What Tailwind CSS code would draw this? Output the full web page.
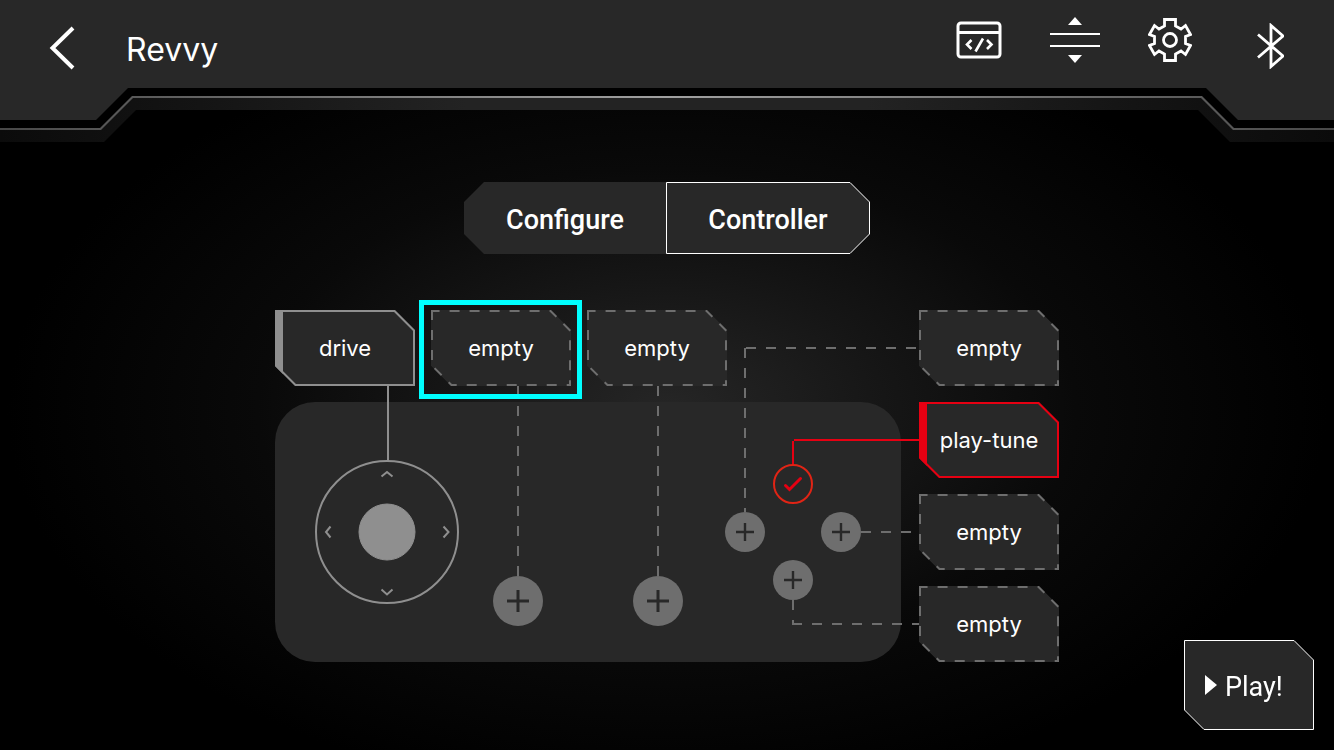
<!DOCTYPE html>
<html lang="en">
<head>
<meta charset="utf-8">
<meta name="viewport" content="width=device-width, initial-scale=1">
<title>Revvy</title>
<script src="https://cdn.jsdelivr.net/npm/@tailwindcss/browser@4"></script>
</head>
<body class="min-h-screen bg-black bg-[radial-gradient(ellipse_660px_390px_at_50%_410px,#262626_0%,#161616_33%,#090909_62%,#000_100%)] text-white">

<header class="relative h-[142px]">
  <!-- header plate: outer band, hairline, gap, plate -->
  <div class="absolute inset-0 bg-[linear-gradient(90deg,#0b0b0b,#141414_15%,#232323_35%,#232323_65%,#141414_85%,#0b0b0b)] [clip-path:polygon(0_0,100%_0,100%_142px,calc(100%-104px)_142px,calc(100%-136px)_110px,136px_110px,104px_142px,0_142px)]"></div>
  <div class="absolute inset-0 bg-[linear-gradient(90deg,#484848,#a0a0a0_50%,#484848)] [clip-path:polygon(0_0,100%_0,100%_130px,calc(100%-101px)_130px,calc(100%-133px)_98px,133px_98px,101px_130px,0_130px)]"></div>
  <div class="absolute inset-0 bg-black [clip-path:polygon(0_0,100%_0,100%_128px,calc(100%-100px)_128px,calc(100%-132px)_96px,132px_96px,100px_128px,0_128px)]"></div>
  <div class="absolute inset-0 bg-[#282828] [clip-path:polygon(0_0,100%_0,100%_120px,calc(100%-96px)_120px,calc(100%-128px)_88px,128px_88px,96px_120px,0_120px)]"></div>

  <div class="relative flex items-start justify-between pl-12 pr-[50px]">
    <div class="flex h-24 items-center gap-[50px]">
      <button type="button" aria-label="Back">
        <svg class="block" width="28" height="44" viewBox="0 0 28 44" fill="none" stroke="#fff" stroke-width="4"><path d="M25 2 4.500 22 25 42"/></svg>
      </button>
      <h1 class="pt-1 font-[Inter,sans-serif] text-[32px] leading-10">Revvy</h1>
    </div>
    <nav class="flex h-20 items-center gap-12">
      <button type="button" aria-label="Code">
        <svg class="block" width="46" height="38" viewBox="0 0 46 38" fill="none" stroke="#fff" stroke-width="3"><rect x="2" y="2" width="42" height="34" rx="3"/><path d="M2 11.500H44"/><path stroke-width="2.600" d="M15.500 19 11 23.500 15.500 28M31 19 35.500 23.500 31 28M27 17.500 19.500 30.500"/></svg>
      </button>
      <button type="button" aria-label="Reorder">
        <svg class="block" width="50" height="46" viewBox="0 0 50 46" fill="#fff"><path d="M25 0 32 8H18ZM25 46 32 38H18ZM0 16H50V18H0ZM0 28H50V30H0Z"/></svg>
      </button>
      <button type="button" aria-label="Settings">
        <svg class="block" width="44" height="44" viewBox="-22 -22 44 44" fill="none" stroke="#fff" stroke-width="2.800"><circle r="6.500"/><path d="M-5.500-20.500H5.500V-14L11-11 15.500-14.500 20.500-5.500 15.500-3.500V3.500L20.500 5.500 15.500 14.500 11 11 5.500 14V20.500H-5.500V14L-11 11-15.500 14.500-20.500 5.500-15.500 3.500V-3.500L-20.500-5.500-15.500-14.500-11-11-5.500-14Z"/></svg>
      </button>
      <button type="button" aria-label="Bluetooth" class="ml-4 mt-3">
        <svg class="block" width="28" height="46" viewBox="0 0 28 46" fill="none" stroke="#fff" stroke-width="2.800"><path d="M2 11.500 27 33 15 43.500V2.500L27 13 2 34.500"/></svg>
      </button>
    </nav>
  </div>
</header>

<main class="px-5 pt-10 pb-22">
  <div class="mx-auto flex w-fit font-[Roboto,sans-serif] text-[27px] font-medium leading-8">
    <button type="button" class="h-18 w-[202px] bg-[#282828] pt-1 [clip-path:polygon(20px_0,100%_0,100%_100%,20px_100%,0_52px,0_20px)]">Configure</button>
    <button type="button" aria-pressed="true" class="relative h-18 w-[204px] pt-1">
      <svg class="absolute inset-0" width="204" height="72" viewBox="0 0 204 72" fill="#282828" stroke="#fff"><path d="M.5.5H184L203.500 20V52L184 71.500H.5Z"/></svg>
      <span class="relative">Controller</span>
    </button>
  </div>

  <section aria-label="Controller layout" class="relative mx-auto mt-14 flex w-[784px] items-start justify-between font-[Inter,sans-serif] text-[22px] leading-8">
    <!-- controller body and wiring -->
    <svg class="absolute inset-0" width="784" height="352" viewBox="0 0 784 352" fill="none">
      <rect y="92" width="626" height="260" rx="40" fill="#282828"/>
      <g stroke="#8f8f8f" stroke-width="2">
        <path d="M113 76V151"/>
        <circle cx="112" cy="222" r="71"/>
        <circle cx="112" cy="222" r="28" fill="#8f8f8f" stroke-width="1"/>
        <path d="M106.500 166.500 112 162 117.500 166.500M106.500 279.500 112 284.500 117.500 279.500M55.500 216.500 51 222 55.500 227.500M168.500 216.500 173.500 222 168.500 227.500"/>
      </g>
      <g stroke="#6e6e6e" stroke-width="2" stroke-dasharray="10 10">
        <path d="M243 76V266M383 76V266M470 38V202M471 38H644M586 222H644M518 290V315M517 314H644"/>
      </g>
      <path d="M518 154V131M519 130H644" stroke="#e60012" stroke-width="2"/>
    </svg>

    <div class="relative flex gap-4">
      <button type="button" class="relative h-19 w-35 [clip-path:polygon(0_0,120px_0,140px_20px,140px_76px,20px_76px,0_56px)]">
        <svg class="absolute inset-0" width="140" height="76" viewBox="0 0 140 76"><path d="M0 0V56L20 76H140V20L120 0Z" fill="#282828" stroke="#8f8f8f" stroke-width="4"/><path d="M0 0H8V76H0Z" fill="#8f8f8f"/></svg>
        <span class="relative">drive</span>
      </button>
      <div class="relative">
        <button type="button" class="relative block h-19 w-35 [clip-path:polygon(0_0,120px_0,140px_20px,140px_76px,20px_76px,0_56px)]">
          <svg class="absolute inset-0" width="140" height="76" viewBox="0 0 140 76"><path d="M0 0V56L20 76H140V20L120 0Z" fill="#282828" stroke="#6e6e6e" stroke-width="4" stroke-dasharray="10 10"/></svg>
          <span class="relative">empty</span>
        </button>
        <div class="pointer-events-none absolute -top-2.5 -left-3 h-[99px] w-[163px] border-5 border-[#00ffff]"></div>
      </div>
      <button type="button" class="relative h-19 w-35 [clip-path:polygon(0_0,120px_0,140px_20px,140px_76px,20px_76px,0_56px)]">
        <svg class="absolute inset-0" width="140" height="76" viewBox="0 0 140 76"><path d="M0 0V56L20 76H140V20L120 0Z" fill="#282828" stroke="#6e6e6e" stroke-width="4" stroke-dasharray="10 10"/></svg>
        <span class="relative">empty</span>
      </button>
    </div>

    <div class="relative flex flex-col gap-4">
      <button type="button" class="relative h-19 w-35 [clip-path:polygon(0_0,120px_0,140px_20px,140px_76px,20px_76px,0_56px)]">
        <svg class="absolute inset-0" width="140" height="76" viewBox="0 0 140 76"><path d="M0 0V56L20 76H140V20L120 0Z" fill="#282828" stroke="#6e6e6e" stroke-width="4" stroke-dasharray="10 10"/></svg>
        <span class="relative">empty</span>
      </button>
      <button type="button" class="relative h-19 w-35 [clip-path:polygon(0_0,120px_0,140px_20px,140px_76px,20px_76px,0_56px)]">
        <svg class="absolute inset-0" width="140" height="76" viewBox="0 0 140 76"><path d="M0 0V56L20 76H140V20L120 0Z" fill="#282828" stroke="#e60012" stroke-width="4"/><path d="M0 0H8V76H0Z" fill="#e60012"/></svg>
        <span class="relative">play-tune</span>
      </button>
      <button type="button" class="relative h-19 w-35 [clip-path:polygon(0_0,120px_0,140px_20px,140px_76px,20px_76px,0_56px)]">
        <svg class="absolute inset-0" width="140" height="76" viewBox="0 0 140 76"><path d="M0 0V56L20 76H140V20L120 0Z" fill="#282828" stroke="#6e6e6e" stroke-width="4" stroke-dasharray="10 10"/></svg>
        <span class="relative">empty</span>
      </button>
      <button type="button" class="relative h-19 w-35 [clip-path:polygon(0_0,120px_0,140px_20px,140px_76px,20px_76px,0_56px)]">
        <svg class="absolute inset-0" width="140" height="76" viewBox="0 0 140 76"><path d="M0 0V56L20 76H140V20L120 0Z" fill="#282828" stroke="#6e6e6e" stroke-width="4" stroke-dasharray="10 10"/></svg>
        <span class="relative">empty</span>
      </button>
    </div>

    <!-- assignable controller buttons -->
    <button type="button" aria-label="Assign left trigger" class="absolute top-[266px] left-[218px] size-[50px] rounded-full bg-[#6e6e6e]">
      <svg class="block" width="50" height="50" viewBox="0 0 50 50" stroke="#282828" stroke-width="3"><path d="M14 25H36M25 14V36"/></svg>
    </button>
    <button type="button" aria-label="Assign right trigger" class="absolute top-[266px] left-[358px] size-[50px] rounded-full bg-[#6e6e6e]">
      <svg class="block" width="50" height="50" viewBox="0 0 50 50" stroke="#282828" stroke-width="3"><path d="M14 25H36M25 14V36"/></svg>
    </button>
    <button type="button" aria-label="Assign left button" class="absolute top-[202px] left-[450px] size-10 rounded-full bg-[#6e6e6e]">
      <svg class="block" width="40" height="40" viewBox="0 0 40 40" stroke="#282828" stroke-width="2.400"><path d="M11 20H29M20 11V29"/></svg>
    </button>
    <button type="button" aria-label="Assign right button" class="absolute top-[202px] left-[546px] size-10 rounded-full bg-[#6e6e6e]">
      <svg class="block" width="40" height="40" viewBox="0 0 40 40" stroke="#282828" stroke-width="2.400"><path d="M11 20H29M20 11V29"/></svg>
    </button>
    <button type="button" aria-label="Assign bottom button" class="absolute top-[250px] left-[498px] size-10 rounded-full bg-[#6e6e6e]">
      <svg class="block" width="40" height="40" viewBox="0 0 40 40" stroke="#282828" stroke-width="2.400"><path d="M11 20H29M20 11V29"/></svg>
    </button>
    <button type="button" aria-label="Top button, assigned" class="absolute top-[154px] left-[498px] size-10 rounded-full border-2 border-[#e02415] bg-[#282828]">
      <svg class="block" width="36" height="36" viewBox="2 2 36 36" fill="none" stroke="#e60012" stroke-width="3" stroke-linecap="round"><path d="M12.500 21.500 16.500 25.500 27.500 14.500"/></svg>
    </button>
  </section>
</main>

<button type="button" class="fixed right-5 bottom-5 flex h-[90px] w-[130px] items-center gap-2 pl-[21px] font-[Roboto,sans-serif] text-[27px] leading-8">
  <svg class="absolute inset-0" width="130" height="90" viewBox="0 0 130 90" fill="#282828" stroke="#fff"><path d="M.5.5H110L129.500 20V89.500H20L.5 70Z"/></svg>
  <svg class="relative" width="12" height="20" viewBox="0 0 12 20" fill="#fff"><path d="M0 0 12 10 0 20Z"/></svg>
  <span class="relative pt-1">Play!</span>
</button>

</body>
</html>
